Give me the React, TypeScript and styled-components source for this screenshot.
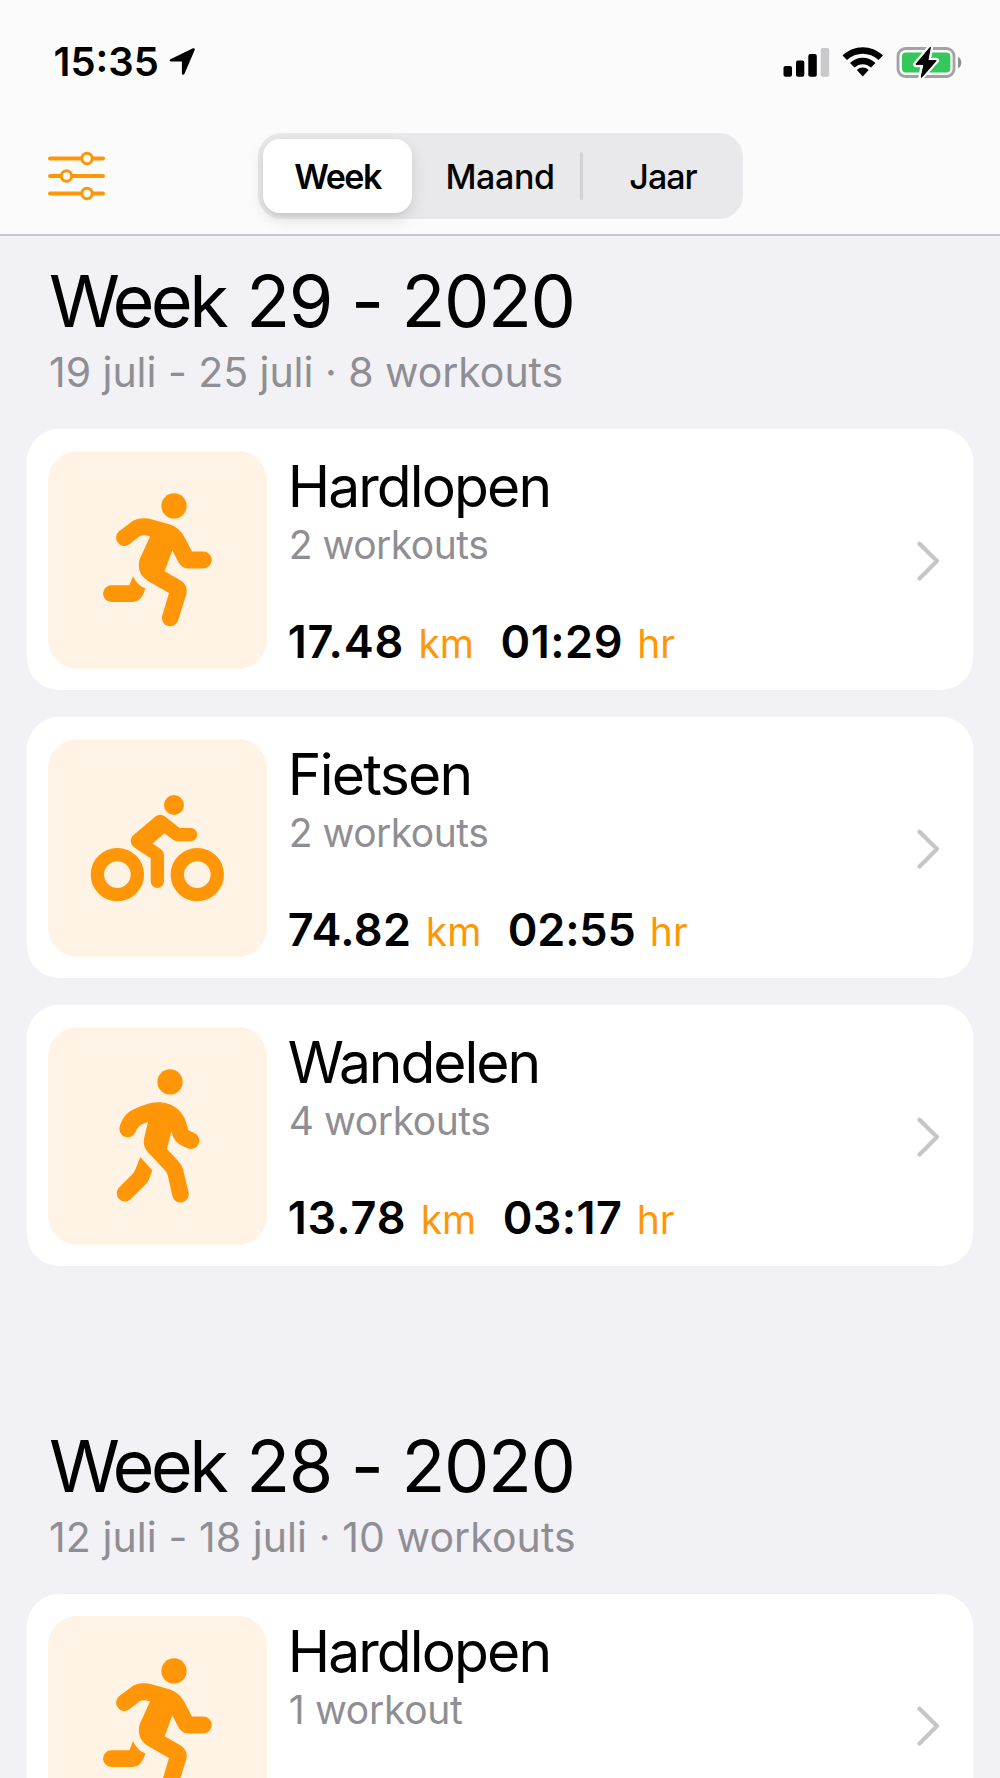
import React from "react";
import styled, { createGlobalStyle } from "styled-components";

const orange = "#ff9607";

const GlobalStyle = createGlobalStyle`
  * { box-sizing: border-box; }
  body { margin: 0; background: #f2f1f6; }
`;

const Screen = styled.div`
  width: 1000px;
  height: 1778px;
  overflow: hidden;
  background: #f2f1f6;
  color: #000;
  font-family: Inter, "Liberation Sans", sans-serif;
  white-space: nowrap;
`;

const Header = styled.header`
  height: 236px;
  background: #fbfbfc;
  border-bottom: 2px solid #c9c9cc;
`;

const StatusBar = styled.div`
  height: 123px;
  padding: 0 38px 0 53.5px;
  display: flex;
  align-items: center;
  justify-content: space-between;
`;

const StatusGroup = styled.div`
  display: flex;
  align-items: center;
`;

const Clock = styled.span`
  font-size: 40px;
  font-weight: 600;
  line-height: 48px;
  margin-right: 10.5px;
`;

const NavBar = styled.nav`
  height: 105.5px;
  padding-left: 48px;
  display: flex;
  align-items: center;
  gap: 153px;
`;

const Segments = styled.div`
  width: 485px;
  height: 85.5px;
  display: grid;
  grid-template-columns: 149px 8px 160px 3px 1fr;
  align-items: center;
  padding-left: 5px;
  background: #e9e9eb;
  border-radius: 24px;
`;

const Segment = styled.button<{ $active?: boolean; $tracking: number }>`
  width: 100%;
  height: 74px;
  padding: 2px 0 0;
  border: 0;
  border-radius: 17px;
  background: ${(p) => (p.$active ? "#fff" : "transparent")};
  box-shadow: ${(p) => (p.$active ? "0 6px 16px rgba(0, 0, 0, 0.12), 0 3px 2px rgba(0, 0, 0, 0.03)" : "none")};
  color: #000;
  font-family: inherit;
  font-size: 34px;
  font-weight: ${(p) => (p.$active ? 600 : 500)};
  letter-spacing: ${(p) => p.$tracking}px;
  text-align: center;
`;

const SegmentDivider = styled.span`
  grid-column: 4;
  width: 3px;
  height: 48px;
  border-radius: 2px;
  background: #d2d2d5;
`;

const Section = styled.section`
  padding: 22px 27px 135px;
`;

const SectionHead = styled.div`
  padding: 0 22px 32.5px;
`;

const SectionTitle = styled.h1`
  margin: 0 0 2.5px;
  font-size: 72px;
  font-weight: 400;
  line-height: 86px;
  letter-spacing: -1.4px;
`;

const TitleWord = styled.span`
  margin-right: 2.5px;
  letter-spacing: -3.7px;
`;

const SectionSub = styled.p<{ $tracking: number }>`
  margin: 0;
  color: #8f8e94;
  font-size: 41px;
  line-height: 50px;
  letter-spacing: ${(p) => p.$tracking}px;
`;

const CardList = styled.div`
  display: flex;
  flex-direction: column;
  gap: 27px;
`;

const Card = styled.article`
  height: 261px;
  padding: 21.5px 34px 21px 21px;
  display: flex;
  align-items: stretch;
  gap: 21px;
  background: #fff;
  border-radius: 32px;
`;

const Tile = styled.div`
  width: 218.7px;
  height: 218.5px;
  flex: none;
  border-radius: 29px;
  overflow: hidden;
  background: #fef3e4;

  svg { display: block; width: 100%; height: 100%; }
`;

const Info = styled.div`
  flex: 1;
  padding-top: 2px;
  display: flex;
  flex-direction: column;
`;

const CardTitle = styled.h2<{ $tracking: number }>`
  margin: 0;
  font-size: 57px;
  font-weight: 400;
  line-height: 68px;
  letter-spacing: ${(p) => p.$tracking}px;
`;

const CardSub = styled.p<{ $tracking: number }>`
  margin: 0;
  padding: 0.5px 0 0 1px;
  color: #8f8e94;
  font-size: 39px;
  line-height: 48px;
  letter-spacing: ${(p) => p.$tracking}px;
`;

const Stats = styled.div`
  margin: auto 0 -2px;
  display: flex;
  align-items: baseline;
  line-height: 54px;
`;

const Value = styled.span<{ $tracking: number }>`
  font-size: 45px;
  font-weight: 600;
  letter-spacing: ${(p) => p.$tracking - 0.5}px;
`;

const Unit = styled.span`
  margin: 0 26.5px 0 14.3px;
  color: ${orange};
  font-size: 39px;
`;

const ChevronSlot = styled.div`
  display: flex;
  align-items: center;

  svg { margin-top: 3px; }
`;

const Runner = () => (
  <svg viewBox="84 92 656 656" fill={orange}>
    <circle cx="462" cy="257" r="38" />
    <path d="M397 298 L450 313 C469 319 485 334 494 352 L516 394 H550 A25.500 25.500 0 0 1 550 445 H508 C494 445 482 438 475 425 L457 391 L434 453 L482 481 C497 490 503 505 499 522 L474 602 A25 25 0 0 1 426 589 L447 518 L384 482 C362 469 351 446 359 417 Q360 413 362 410 L390 349 C376 344 365 343 355 351 L327 373 A25 25 0 0 1 296 334 L334 305 C350 293 373 291 397 298Z" />
    <path d="M339 468 C347 485 359 498 376 505 C367 532 358 545 338 545 H274 A25 25 0 0 1 274 495 H328Z" />
  </svg>
);

const Cyclist = () => (
  <svg viewBox="84 86 656 656" fill={orange}>
    <circle cx="462" cy="284" r="30" />
    <g fill="none" stroke={orange} strokeWidth="40">
      <circle cx="292" cy="493" r="60" />
      <circle cx="532" cy="493" r="60" />
    </g>
    <path d="M435 319 L479 353 H512 A20 20 0 0 1 512 393 H473 Q465 393 458 388 L433 369 L398 400 L423 417 Q432 424 432 435 V513 A20 20 0 0 1 392 513 V444 L342 411 C330 402 329 387 339 376 L406 319 Q421 308 435 319Z" />
  </svg>
);

const Walker = () => (
  <svg viewBox="84 80 656 656" fill={orange}>
    <circle cx="450" cy="245" r="38" />
    <path d="M415 306 C460 306 490 335 499 368 L505 390 L523 398 A25 25 0 0 1 503 444 L485 436 C467 427 459 412 454 393 L441 446 L478 486 Q486 495 489 507 L506 577 A25 25 0 0 1 457 587 L443 524 Q441 516 434 509 L384 456 C372 443 369 428 373 411 L384 365 L368 371 Q355 376 350 387 L346 396 A25 25 0 0 1 300 375 C308 352 321 335 343 326 C366 317 388 306 415 306Z" />
    <path d="M361 470 L397 511 L388 535 Q384 545 378 551 L330 599 A25 25 0 0 1 295 564 L337 522 Q343 516 346 508Z" />
  </svg>
);

const Chevron = () => (
  <svg width="22" height="40" viewBox="0 0 22 40" fill="none" stroke="#c6c6c9" strokeWidth="4.200" strokeLinecap="round" strokeLinejoin="round">
    <path d="M2.500 2.700 L20 20 L2.500 37.500" />
  </svg>
);

const LocationArrow = () => (
  <svg width="27" height="28" viewBox="0 0 27 28">
    <path d="M24.500 1.500 L2 12.300 H14.200 V25.500 Z" stroke="#000" strokeWidth="2.600" strokeLinejoin="round" />
  </svg>
);

const StatusIcons = () => (
  <svg width="180" height="36" viewBox="782 43 180 36">
    <rect x="783.500" y="65" width="8.500" height="10.700" rx="2" />
    <rect x="796" y="59.500" width="8.300" height="16.200" rx="2" />
    <rect x="808.300" y="53" width="8.500" height="22.700" rx="2" />
    <rect x="820.700" y="47" width="8.500" height="28.700" rx="2" fill="#c9c9cb" />
    <path d="M842.500 54.500 C854 43.500 871.500 43.500 883 54.500 L878.500 59 C869.500 50.500 856 50.500 847 59Z" />
    <path d="M850 62 C857.500 55 868 55 875.500 62 L871 66.500 C866 62 859.500 62 854.500 66.500Z" />
    <path d="M856.800 69 C860.500 65.700 865 65.700 868.700 69 L862.800 75.400Z" />
    <rect x="898" y="47.500" width="56" height="28" rx="7.500" fill="none" stroke="#a3a3a6" strokeWidth="2.800" />
    <rect x="902" y="51.500" width="48.300" height="20" rx="4" fill="#34c759" />
    <path d="M958 56 C962.500 57.500 962.500 65.500 958 67.200Z" fill="#909093" />
    <path d="M930.500 46 L915.800 63.500 H923.500 L921 76.500 L936.300 59.500 H928Z" fill="#000" stroke="#fbfbfc" strokeWidth="5.500" strokeLinejoin="round" paintOrder="stroke" />
    <path d="M930.200 46.700 L916.300 63.200 H924.300 L921.500 76 L935.800 59.800 H927.500Z" stroke="#000" strokeWidth="1.300" strokeLinejoin="round" />
  </svg>
);

const FilterIcon = () => (
  <svg width="57" height="50" viewBox="48 151 57 50" stroke={orange} fill="#fbfbfc" strokeLinecap="round">
    <path d="M50 158.500H103M50 176H103M50 193.500H103" strokeWidth="4" />
    <g strokeWidth="3">
      <circle cx="87" cy="158.500" r="5.200" />
      <circle cx="66.500" cy="176" r="5.200" />
      <circle cx="87" cy="193.500" r="5.200" />
    </g>
  </svg>
);

type Workout = {
  name: string;
  nameTracking: number;
  count: string;
  countTracking: number;
  distance: string;
  distanceTracking: number;
  time: string;
  timeTracking: number;
  Icon: React.FC;
};

type Week = { number: number; year: number; sub: string; subTracking: number; workouts: Workout[] };

const weeks: Week[] = [
  {
    number: 29,
    year: 2020,
    sub: "19 juli - 25 juli · 8 workouts",
    subTracking: -0.04,
    workouts: [
      { name: "Hardlopen", nameTracking: -1.9, count: "2 workouts", countTracking: -0.5, distance: "17.48", distanceTracking: 1.3, time: "01:29", timeTracking: 1, Icon: Runner },
      { name: "Fietsen", nameTracking: -1.7, count: "2 workouts", countTracking: -0.5, distance: "74.82", distanceTracking: 0.9, time: "02:55", timeTracking: 0.3, Icon: Cyclist },
      { name: "Wandelen", nameTracking: -2.05, count: "4 workouts", countTracking: -0.42, distance: "13.78", distanceTracking: 1.4, time: "03:17", timeTracking: 0.9, Icon: Walker },
    ],
  },
  {
    number: 28,
    year: 2020,
    sub: "12 juli - 18 juli · 10 workouts",
    subTracking: 0.08,
    workouts: [
      { name: "Hardlopen", nameTracking: -1.9, count: "1 workout", countTracking: -0.3, distance: "", distanceTracking: 0, time: "", timeTracking: 0, Icon: Runner },
    ],
  },
];

const WorkoutCard = ({ workout }: { workout: Workout }) => (
  <Card>
    <Tile>
      <workout.Icon />
    </Tile>
    <Info>
      <CardTitle $tracking={workout.nameTracking}>{workout.name}</CardTitle>
      <CardSub $tracking={workout.countTracking}>{workout.count}</CardSub>
      {workout.distance && (
        <Stats>
          <Value $tracking={workout.distanceTracking}>{workout.distance}</Value>
          <Unit>km</Unit>
          <Value $tracking={workout.timeTracking}>{workout.time}</Value>
          <Unit>hr</Unit>
        </Stats>
      )}
    </Info>
    <ChevronSlot>
      <Chevron />
    </ChevronSlot>
  </Card>
);

export default function App() {
  return (
    <Screen>
      <GlobalStyle />
      <Header>
        <StatusBar>
          <StatusGroup>
            <Clock>15:35</Clock>
            <LocationArrow />
          </StatusGroup>
          <StatusIcons />
        </StatusBar>
        <NavBar>
          <FilterIcon />
          <Segments>
            <Segment $active $tracking={-1.5}>Week</Segment>
            <span />
            <Segment $tracking={-0.4}>Maand</Segment>
            <SegmentDivider />
            <Segment $tracking={-1}>Jaar</Segment>
          </Segments>
        </NavBar>
      </Header>
      {weeks.map((week) => (
        <Section key={week.number}>
          <SectionHead>
            <SectionTitle>
              <TitleWord>Week</TitleWord>
              {` ${week.number} - ${week.year}`}
            </SectionTitle>
            <SectionSub $tracking={week.subTracking}>{week.sub}</SectionSub>
          </SectionHead>
          <CardList>
            {week.workouts.map((workout) => (
              <WorkoutCard key={workout.name} workout={workout} />
            ))}
          </CardList>
        </Section>
      ))}
    </Screen>
  );
}
